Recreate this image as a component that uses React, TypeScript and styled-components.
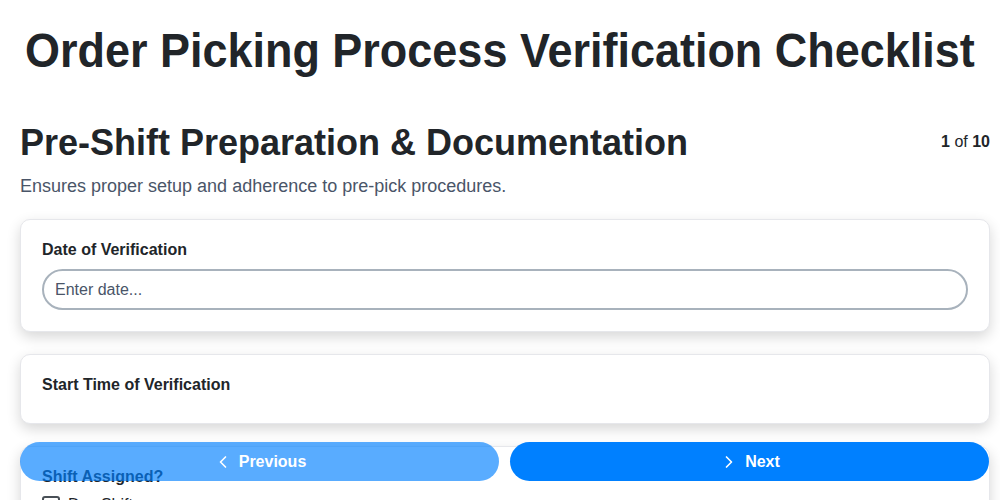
import React, { useState } from 'react';
import styled, { createGlobalStyle } from 'styled-components';
import { ChevronLeft, ChevronRight } from 'lucide-react';

const GlobalStyle = createGlobalStyle`
  body {
    margin: 0;
    background: #fff;
    font-family: 'Liberation Sans', Arial, sans-serif;
    color: #1f2328;
  }
`;

const Page = styled.div`
  padding: 0 10px 80px 20px;
`;

const TitleRow = styled.div`
  padding: 27px 0 46px;
  display: flex;
  justify-content: center;
`;

const Title = styled.h1`
  margin: 0;
  white-space: nowrap;
  font-size: 48px;
  font-weight: 700;
  line-height: 48px;
  color: #212529;
  transform: scaleX(0.937);
`;

const SectionHead = styled.div`
  display: flex;
  justify-content: space-between;
  align-items: flex-start;
`;

const SectionTitle = styled.h2`
  margin: 0;
  font-size: 36px;
  font-weight: 700;
  line-height: 44px;
  color: #212529;
`;

const Counter = styled.div`
  font-size: 16px;
  color: #212529;
  padding-top: 12px;
  b {
    font-weight: 700;
  }
`;

const SectionDesc = styled.p`
  margin: 11px 0 22px;
  font-size: 18px;
  color: #4a5568;
`;

const Card = styled.div<{ $tight?: boolean }>`
  background: #fff;
  border: 1px solid #e6e7eb;
  border-radius: 10px;
  box-shadow: 0 5px 14px rgba(0, 0, 0, 0.16);
  padding: 20px 21px ${(p) => (p.$tight ? '19px' : '21px')};
  margin-bottom: 22px;
`;

const Label = styled.div`
  font-size: 16px;
  font-weight: 700;
  color: #212529;
  margin-bottom: 9px;
  line-height: 20px;
`;

const TextInput = styled.input`
  display: block;
  box-sizing: border-box;
  width: 100%;
  height: 41px;
  border: 2px solid #a8b2bc;
  border-radius: 21px;
  padding: 0 11px;
  font-family: 'Liberation Sans', Arial, sans-serif;
  font-size: 16px;
  color: #212529;
  outline: none;
  &::placeholder {
    color: #4a5568;
  }
`;

const CheckRow = styled.label`
  display: flex;
  align-items: center;
  gap: 8px;
  font-size: 16px;
  color: #212529;
  margin-bottom: 8px;
`;

const Box = styled.input`
  appearance: none;
  width: 18px;
  height: 18px;
  margin: 0;
  border: 2px solid #495057;
  border-radius: 3px;
`;

const NavBar = styled.div`
  position: fixed;
  left: 20px;
  right: 11px;
  bottom: 19px;
  display: flex;
  gap: 11px;
`;

const NavButton = styled.button<{ $disabled?: boolean }>`
  flex: 1;
  height: 39px;
  border: none;
  border-radius: 20px;
  background: #0080ff;
  opacity: ${(p) => (p.$disabled ? 0.65 : 1)};
  color: #fff;
  font-family: 'Liberation Sans', Arial, sans-serif;
  font-size: 16px;
  font-weight: 700;
  display: flex;
  align-items: center;
  justify-content: center;
  gap: 6px;
  cursor: pointer;
`;

export default function App() {
  const [step] = useState(1);
  return (
    <>
      <GlobalStyle />
      <TitleRow>
        <Title>Order Picking Process Verification Checklist</Title>
      </TitleRow>
      <Page>
        <SectionHead>
          <SectionTitle>Pre-Shift Preparation &amp; Documentation</SectionTitle>
          <Counter>
            <b>{step}</b> of <b>10</b>
          </Counter>
        </SectionHead>
        <SectionDesc>Ensures proper setup and adherence to pre-pick procedures.</SectionDesc>
        <Card>
          <Label>Date of Verification</Label>
          <TextInput placeholder="Enter date..." />
        </Card>
        <Card $tight>
          <Label>Start Time of Verification</Label>
        </Card>
        <Card>
          <Label>Shift Assigned?</Label>
          <CheckRow>
            <Box type="checkbox" /> Day Shift
          </CheckRow>
          <CheckRow>
            <Box type="checkbox" /> Night Shift
          </CheckRow>
        </Card>
      </Page>
      <NavBar>
        <NavButton $disabled>
          <ChevronLeft size={20} strokeWidth={2} /> Previous
        </NavButton>
        <NavButton>
          <ChevronRight size={20} strokeWidth={2} /> Next
        </NavButton>
      </NavBar>
    </>
  );
}
